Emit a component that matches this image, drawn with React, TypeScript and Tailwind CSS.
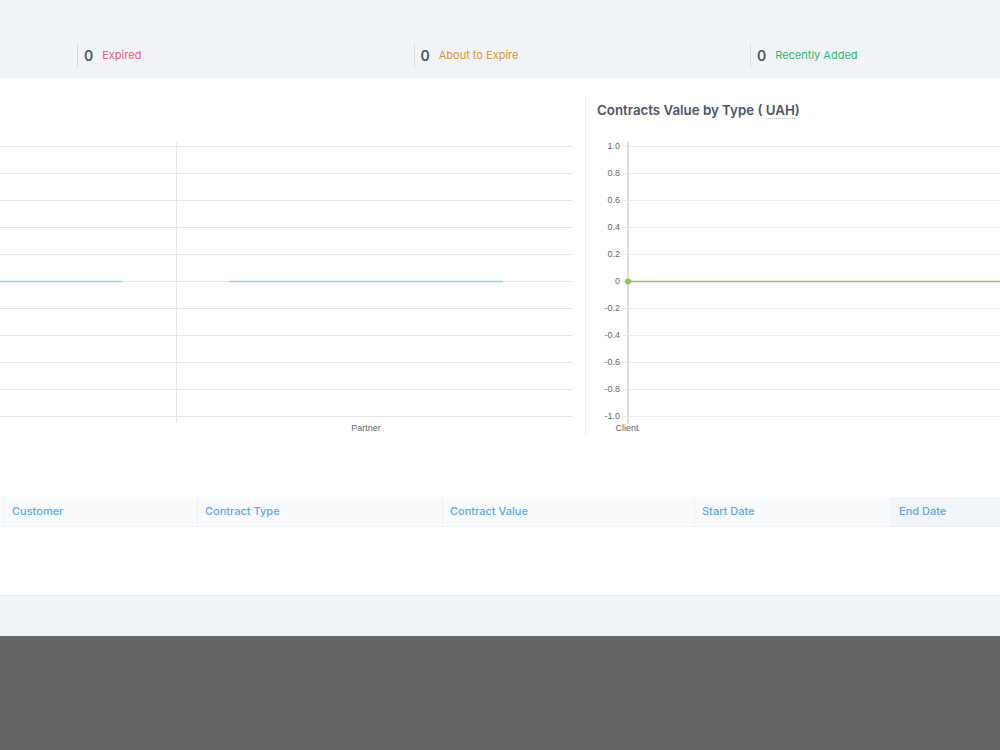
import React from 'react'

const stats = [
  { label: 'Expired', color: 'text-[#ef5a6f]' },
  { label: 'About to Expire', color: 'text-[#d29a34]' },
  { label: 'Recently Added', color: 'text-[#37b57a]' },
]

const columns = [
  { name: 'Customer', width: 'w-[193px]', bg: 'bg-[#f8fafc]' },
  { name: 'Contract Type', width: 'w-[245px]', bg: 'bg-[#f8fafc]' },
  { name: 'Contract Value', width: 'w-[252px]', bg: 'bg-[#f8fafc]' },
  { name: 'Start Date', width: 'w-[197px]', bg: 'bg-[#f8fafc]' },
  { name: 'End Date', width: 'flex-1', bg: 'bg-[#f2f5f9]' },
]

const gridRows = Array.from({ length: 11 }, (_, i) => i)
const yLabels = ['1.0', '0.8', '0.6', '0.4', '0.2', '0', '-0.2', '-0.4', '-0.6', '-0.8', '-1.0']

function PartnerChart() {
  return (
    <svg width="585" height="341" className="block" style={{ fontFamily: '"Liberation Sans", Arial, sans-serif' }}>
      {gridRows.map((i) => (
        <line key={i} x1="0" x2="573" y1={50.5 + i * 27} y2={50.5 + i * 27} stroke="#e6e6e6" strokeWidth="1" />
      ))}
      <line x1="176.5" x2="176.5" y1="46" y2="327" stroke="#e6e6e6" strokeWidth="1" />
      <line x1="0" x2="122" y1="185.5" y2="185.5" stroke="#8fd0f7" strokeWidth="1.5" />
      <line x1="229" x2="503" y1="185.5" y2="185.5" stroke="#8fd0f7" strokeWidth="1.5" />
      <text x="366" y="335" textAnchor="middle" fontSize="9" fill="#666">Partner</text>
    </svg>
  )
}

function ValueChart() {
  return (
    <svg width="415" height="311" className="block" style={{ fontFamily: '"Liberation Sans", Arial, sans-serif' }}>
      {gridRows.map((i) => (
        <g key={i}>
          <line x1="36" x2="415" y1={20.5 + i * 27} y2={20.5 + i * 27} stroke="#ececec" strokeWidth="1" />
          <text x="34" y={23 + i * 27} textAnchor="end" fontSize="9" fill="#666">
            {yLabels[i]}
          </text>
        </g>
      ))}
      <line x1="42" x2="42" y1="16" y2="298" stroke="#dcdcdc" strokeWidth="2" />
      <line x1="42" x2="415" y1="155.5" y2="155.5" stroke="#8cc759" strokeWidth="1.5" />
      <circle cx="42" cy="155.5" r="3" fill="#8cc759" />
      <text x="41" y="305" textAnchor="middle" fontSize="9" fill="#666">Client</text>
    </svg>
  )
}

export default function App() {
  return (
    <div className="w-[1000px] h-[750px] overflow-hidden flex flex-col font-['Inter',sans-serif]">
      {/* stats strip */}
      <div className="h-[78px] bg-[#f0f3f8] flex items-end pl-[77px] pb-[11px] shrink-0">
        {stats.map((s) => (
          <div key={s.label} className="w-[336.5px] shrink-0 h-[23px] border-l border-[#d9dde3] flex items-center pl-[6px] gap-[9px]">
            <span className="text-[14px] font-semibold text-[#4a5568]">0</span>
            <span className={`text-[11px] ${s.color}`}>{s.label}</span>
          </div>
        ))}
      </div>

      {/* main card */}
      <div className="h-[518px] bg-white border-b border-[#e4e7ec] shrink-0 flex flex-col">
        <div className="flex pt-[18px]">
          <div className="w-[585px] h-[341px] shrink-0">
            <PartnerChart />
          </div>
          <div className="flex-1 h-[341px] border-l border-[#eef0f3] flex flex-col">
            <div className="h-[30px] pt-[2px] pl-[11px] leading-[24px] text-[13.3px] font-semibold text-[#4a5568]">
              Contracts Value by Type ({' '}
              <abbr className="no-underline border-b border-dotted border-[#b9c0ca]">UAH</abbr>)
            </div>
            <ValueChart />
          </div>
        </div>

        <div className="mt-[60px] flex h-[30px] border-b border-[#eef1f5]">
          <div className="w-[4px] shrink-0 bg-[#f8fafc]" />
          {columns.map((c) => (
            <div
              key={c.name}
              className={`${c.width} shrink-0 ${c.bg} border-l border-[#eef1f5] flex items-center pl-[7px] text-[11px] font-medium text-[#5aa8f5]`}
            >
              {c.name}
            </div>
          ))}
        </div>
      </div>

      <div className="h-[40px] bg-[#f0f3f8] shrink-0" />
      <div className="flex-1 bg-[#666666]" />
    </div>
  )
}
